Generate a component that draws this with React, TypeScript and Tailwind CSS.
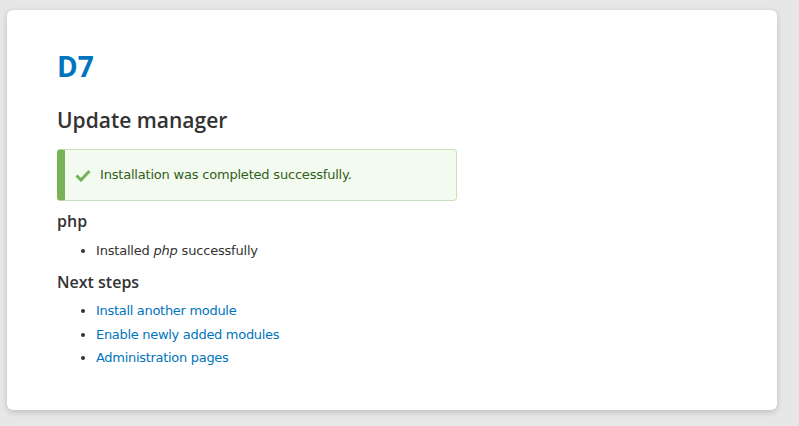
const links = ["Install another module", "Enable newly added modules", "Administration pages"];

export default function App() {
  return (
    <div
      className="min-h-[426px] bg-[#e7e7e7] pt-[10px] pl-[7px] pr-[22px] pb-4 text-[#333]"
      style={{ fontFamily: '"DejaVu Sans", Verdana, sans-serif' }}
    >
      <div className="h-[400px] rounded-md bg-white shadow-[0_2px_6px_rgba(0,0,0,0.18)] pl-[50px] pt-[38px]">
        <h1 className="font-['Open_Sans',sans-serif] text-[28px] font-bold leading-[36px] text-[#0074bd]">D7</h1>
        <h2 className="mt-[22px] font-['Open_Sans',sans-serif] text-[21px] font-semibold leading-[28px] text-[#333]">
          Update manager
        </h2>

        <div className="mt-[15px] flex h-[52px] w-[400px] items-center rounded-sm border border-l-[8px] border-[#c9e1bd] border-l-[#77b259] bg-[#f3faef] pl-[10px] text-[13px] tracking-[-0.2px] text-[#325e1c]">
          <svg width="16" height="13" viewBox="0 0 16 13" className="mr-[9px]">
            <path d="M1.5 6.5l4.5 4.5 8.5-9" fill="none" stroke="#73b355" strokeWidth="3" />
          </svg>
          Installation was completed successfully.
        </div>

        <h3 className="mt-[10px] font-['Open_Sans',sans-serif] text-[16px] font-semibold leading-[20px]">php</h3>
        <ul className="mt-[10px] list-disc pl-[39px] text-[13px] leading-[20px] tracking-[-0.2px]">
          <li>
            Installed <em>php</em> successfully
          </li>
        </ul>

        <h3 className="mt-[11px] font-['Open_Sans',sans-serif] text-[16px] font-semibold leading-[20px]">Next steps</h3>
        <ul className="mt-[7px] list-disc pl-[39px] text-[13px] leading-[23.5px] tracking-[-0.3px]">
          {links.map((l) => (
            <li key={l}>
              <a href="#" className="text-[#0074bd]">
                {l}
              </a>
            </li>
          ))}
        </ul>
      </div>
    </div>
  );
}
